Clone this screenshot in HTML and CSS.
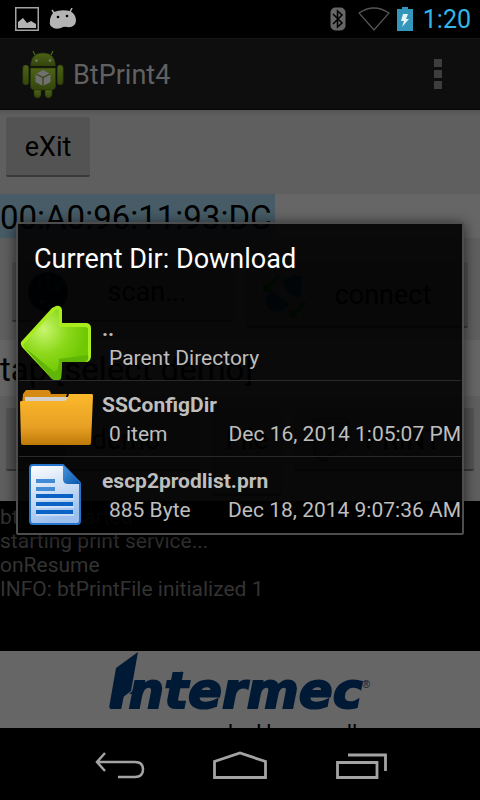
FILE: index.html
```html
<!DOCTYPE html>
<html lang="en">
<head>
<meta charset="utf-8">
<meta name="viewport" content="width=device-width, initial-scale=1">
<title>BtPrint4</title>
<link rel="stylesheet" href="styles.css">
</head>
<body>
<div class="screen">
  <header class="status">
    <div class="status-group">
      <svg width="24" height="24" viewBox="0 0 24 24" aria-hidden="true"><rect x=".75" y=".75" width="22.5" height="22.5" fill="none" stroke="#a3a3a3" stroke-width="1.5"/><path d="M3 21V15L8 11L12 16L16 14L21 17V21Z" fill="#b4b4b4"/></svg>
      <svg width="28" height="22" viewBox="0 0 28 22" aria-hidden="true"><path d="M5 5L3 2M21 4L23 0" stroke="#b4b4b4" stroke-width="1.5"/><path d="M5 4Q12 1 21 3Q27 6 27 13Q26 20 18 19Q15 18 12 20Q6 22 3 19Q0 17 1 13Q1 8 5 4Z" fill="#b4b4b4"/><circle cx="9" cy="9" r="1.3"/><circle cx="18" cy="8" r="1.3"/></svg>
    </div>
    <div class="status-group status-right">
      <svg width="16" height="24" viewBox="0 0 16 24" aria-hidden="true"><rect x=".5" y=".5" width="15" height="23" rx="5" fill="#666"/><path d="M3 7L12 16L7.500 20V4L12 8L3 17" fill="none" stroke="#000" stroke-width="1.5"/></svg>
      <svg class="wifi" width="32" height="24" viewBox="0 0 32 24" aria-hidden="true"><path d="M1 6Q16 -4 31 6L16 23Z" fill="none" stroke="#555" stroke-width="1.3"/></svg>
      <svg width="16" height="24" viewBox="0 0 16 24" aria-hidden="true"><path d="M5 0H11V2H16V24H0V2H5Z" fill="#3496ba"/><path d="M6 7H11L9 12H12L5 20L7 14H4Z" fill="#e6f3f8"/></svg>
      <span class="clock">1:20</span>
    </div>
  </header>

  <div class="action-bar">
    <svg width="42" height="50" viewBox="0 0 42 50" aria-hidden="true"><defs><linearGradient id="robot" x2="0" y2="1"><stop stop-color="#4c6317"/><stop offset="1" stop-color="#34460d"/></linearGradient></defs><g fill="url(#robot)" stroke="#263508" stroke-width=".6"><path d="M8.500 17Q9 4 21 4T33.500 17Z"/><path d="M8.500 19H33.500V37Q33.500 41 29 41H13Q8.500 41 8.500 37Z"/><rect x=".8" y="16" width="6" height="20" rx="3"/><rect x="35.200" y="16" width="6" height="20" rx="3"/><path d="M12 41H19V46Q18 49 15.500 49T12 46ZM23 41H30V46Q29 49 26.500 49T23 46Z"/></g><path d="M13 6L11 2M29 6L31 2" stroke="#4c6317" stroke-width="1.3"/><circle cx="14.500" cy="11.500" r="1.300" fill="#777"/><circle cx="28" cy="11.500" r="1.300" fill="#777"/><path d="M21 21L28.500 25V33L21 37L13.500 33V25Z" fill="#707070"/><path d="M14 25L21 28.500L28 25M21 28.500V37" fill="none" stroke="#34460d" stroke-width="1.3"/></svg>
    <h1>BtPrint4</h1>
    <button class="overflow" type="button" aria-label="More options"><i></i><i></i><i></i></button>
  </div>

  <main class="content">
    <div class="band exit-band"><button class="btn" type="button">eXit</button></div>
    <div class="address"><span>00:A0:96:11:93:DC</span></div>
    <div class="band connect-band">
      <button class="btn wide" type="button"><svg width="40" height="40" viewBox="0 0 40 40" aria-hidden="true"><circle cx="20" cy="20" r="20" fill="#001326"/><path d="M20 1V20L35 10" fill="none" stroke="#052a23" stroke-width="2"/><path d="M10 12h3v3h-3zM28 15h3v3h-3zM12 28h4v3h-4z" fill="#074024"/></svg><span>scan...</span></button>
      <button class="btn wide tall" type="button"><svg width="44" height="44" viewBox="0 0 44 44" aria-hidden="true"><path d="M20 9Q30 0 41 3L38 24Q27 24 20 9ZM3 26L10 17L27 31Q19 44 6 36Z" fill="#1a3350"/><path d="M17 3L3 17M3 11V17H9M43 29L29 43M29 37V43H35" fill="none" stroke="#0a4a0a" stroke-width="4"/></svg><span>connect</span></button>
    </div>
    <p class="selection">tap [select demo]</p>
    <div class="band print-band">
      <button class="btn demo" type="button"><svg width="46" height="48" viewBox="0 0 46 48" aria-hidden="true"><rect y="6" width="46" height="40" rx="6" fill="#3c3c3c"/></svg><span>demo</span></button>
      <button class="btn file" type="button">File</button>
      <button class="btn print" type="button"><svg width="38" height="44" viewBox="0 0 38 44" aria-hidden="true"><path d="M2 0H34L38 8L34 30L18 37L13 44L3 38Z" fill="#484848" stroke="#333" stroke-width="2"/></svg><span>PRINT</span></button>
    </div>
    <div class="log"><p>btprint started</p><p>starting print service...</p><p>onResume</p><p>INFO: btPrintFile initialized 1</p></div>
    <footer class="brand">
      <svg class="logo" width="262" height="62" viewBox="0 0 262 62" role="img" aria-label="Intermec"><text class="wordmark" x="1" y="57">Intermec</text><path d="M0 57L7 17L29 1L22 40Z"/><path d="M20 43L36 29L34 43ZM58 32L73 20L71 33Z"/><text class="registered" x="253" y="37">®</text></svg>
      <p>by Honeywell</p>
    </footer>
  </main>

  <nav class="nav" aria-label="System navigation">
    <button type="button" aria-label="Back"><svg width="52" height="30" viewBox="0 0 52 30"><path d="M12 2L4 11L12 20M4 11H42Q50 11 50 18.500T42 26H25" fill="none" stroke="#a3a3a3" stroke-width="2.500"/></svg></button>
    <button type="button" aria-label="Home"><svg width="54" height="30" viewBox="0 0 54 30"><path d="M1.500 26.500V10.500L27 2L52.500 10.500V26.500Z" fill="none" stroke="#a3a3a3" stroke-width="2.800"/></svg></button>
    <button type="button" aria-label="Recent apps"><svg width="52" height="30" viewBox="0 0 52 30"><path d="M2.500 11.500H42V26.500H2.500ZM13 4H50.500V20" fill="none" stroke="#a3a3a3" stroke-width="2.800"/></svg></button>
  </nav>

  <section class="dialog" role="dialog" aria-labelledby="dialog-title">
    <h2 id="dialog-title">Current Dir: Download</h2>
    <ul>
      <li>
        <svg width="76" height="76" viewBox="0 0 76 76" aria-hidden="true"><defs><radialGradient id="arrow" cx=".32" cy=".3" r=".65"><stop stop-color="#c8f56e"/><stop offset=".55" stop-color="#8dd91b"/><stop offset="1" stop-color="#70c804"/></radialGradient></defs><path d="M2 37Q1 39 3 42L33 74Q37 76 42 74L43 57H68Q72 56 72 51V23Q72 19 68 18H43V5Q42 0 37 1L33 3Z" fill="#a9ed1e"/><path d="M4 40L35 71Q38 73 41 71V54H66Q69 54 69 50V24Q69 22 66 22H40V6Q39 3 36 5Z" fill="url(#arrow)"/><path d="M4 41L34 66Q40 69 40 54L69 50Q70 56 66 57H43L42 74Q37 76 33 74Z" fill="#61b506"/></svg>
        <div class="entry"><strong>..</strong><div class="meta"><span>Parent Directory</span></div></div>
      </li>
      <li>
        <svg width="76" height="76" viewBox="0 0 76 76" aria-hidden="true"><defs><linearGradient id="folder" x2="0" y2="1"><stop stop-color="#fdb92c"/><stop offset=".65" stop-color="#e7a024"/><stop offset="1" stop-color="#be7908"/></linearGradient></defs><path d="M4 13L7 9H29Q31 9 32 13H48L44 24H3Z" fill="#d68a12"/><path d="M6 16H50L45 23H6Z" fill="#d3d0cb"/><path d="M1 21Q1 20 3 20H45Q48 20 50 13H73Q74 13 74 15L72 62Q72 64 70 64H4Q2 64 2 62Z" fill="url(#folder)"/></svg>
        <div class="entry"><strong>SSConfigDir</strong><div class="meta"><span>0 item</span><time>Dec 16, 2014 1:05:07 PM</time></div></div>
      </li>
      <li>
        <svg width="76" height="76" viewBox="0 0 76 76" aria-hidden="true"><defs><linearGradient id="paper" x2=".3" y2="1"><stop stop-color="#fff"/><stop offset="1" stop-color="#9cbfec"/></linearGradient><linearGradient id="fold" x2="1" y2="1"><stop stop-color="#4996de"/><stop offset="1" stop-color="#0754aa"/></linearGradient></defs><path d="M14 8H44L61 26V64Q61 67 58 67H14Q11 67 11 64V11Q11 8 14 8Z" fill="url(#paper)" stroke="#2674cc" stroke-width="2"/><path d="M44 8L62 27H49Q44 27 44 22Z" fill="url(#fold)"/><path d="M17 24H36M17 32H36" stroke="#448bd5" stroke-width="4"/><path d="M17 39H54M17 47H54M17 55H54" stroke="#0962c4" stroke-width="4"/><path d="M17 42H55M17 50H55M17 58H55" stroke="#e9f2ff" stroke-width="1"/></svg>
        <div class="entry"><strong>escp2prodlist.prn</strong><div class="meta"><span>885 Byte</span><time>Dec 18, 2014 9:07:36 AM</time></div></div>
      </li>
    </ul>
  </section>
</div>
</body>
</html>
```
FILE: styles.css
```css
* { box-sizing: border-box; }
body { margin: 0; background: #000; font-family: Roboto, "Liberation Sans", sans-serif; }
h1, h2, p, ul { margin: 0; padding: 0; font-weight: 400; }
button { border: 0; padding: 0; background: none; color: inherit; font: inherit; }
svg { display: block; flex: none; }

.screen { position: relative; display: flex; flex-direction: column; min-height: 100vh; overflow: hidden; }
.status { display: flex; justify-content: space-between; align-items: center; height: 38px; padding: 0 9px 0 15px; }
.status-group { display: flex; align-items: center; gap: 10px; }
.status-right { gap: 8px; }
.wifi { margin: 0 -1px 0 4px; }
.clock { padding: 2px 0 0 2px; color: #33b5e5; font-size: 25px; line-height: 36px; }

.action-bar { display: flex; align-items: center; gap: 9px; min-height: 72px; padding: 0 38px 0 22px; background: #0e0e0e; border-top: 1px solid #171717; border-bottom: 1px solid #050505; }
.action-bar h1 { flex: 1; padding-top: 2px; color: #616161; font-size: 27px; line-height: 36px; }
.overflow { display: grid; gap: 3px; }
.overflow i { width: 8px; height: 8px; background: #3d3d3d; }

.content { flex: 1; display: flex; flex-direction: column; background: #666; color: #000; }
.band { display: flex; background: #5f5f5f; }
.btn { display: flex; align-items: center; justify-content: center; min-height: 60px; padding: 2px 18px 0; background: #535353; border-bottom: 2px solid #393939; border-radius: 2px; font-size: 27px; line-height: 36px; }
.btn span { flex: 1; }
.exit-band { padding: 7px 6px 17px; background: linear-gradient(#555, #5f5f5f 6px); }
.exit-band .btn { min-width: 84px; }
.address { font-size: 33px; line-height: 40px; }
.address span { display: inline-block; padding: 4px 3px 0 0; background: #475c66; }
.connect-band { gap: 12px; padding: 24px 12px 12px; align-items: flex-start; }
.wide { flex: 1; padding: 2px 8px 0 16px; }
.tall { min-height: 66px; }
.selection { padding: 10px 0 6px; font-size: 33px; line-height: 40px; }
.print-band { gap: 12px; padding: 12px 6px 5px; align-items: flex-start; }
.demo { flex: 1; padding: 2px 14px 0; min-height: 63px; }
.file { width: 70px; padding: 2px 8px 24px; min-height: 88px; }
.print { width: 180px; min-height: 63px; }
.log { min-height: 150px; padding-top: 4px; background: #000; color: #333; font-size: 21px; line-height: 24px; }
.brand { height: 77px; overflow: hidden; background: #666; }
.logo { margin: 0 auto; fill: #001a36; }
.wordmark { font: italic 700 50px "DejaVu Sans", sans-serif; stroke: #001a36; stroke-width: 2; }
.registered { font: 11px "Liberation Sans", sans-serif; }
.brand p { padding-left: 228px; padding-top: 8px; font-size: 22px; line-height: 24px; }

.nav { display: flex; justify-content: center; align-items: center; gap: 68px; height: 72px; padding-top: 4px; background: #000; }

.dialog { position: absolute; top: 222px; left: 16px; right: 16px; background: rgba(0, 0, 0, .9); border: 2px solid #4d4d4d; border-radius: 2px; box-shadow: 0 2px 14px rgba(0, 0, 0, .65); color: #bebebe; }
.dialog h2 { padding: 15px 16px 26px; color: #fff; font-size: 27px; line-height: 40px; }
.dialog ul { list-style: none; }
.dialog li { display: flex; align-items: center; gap: 7px; height: 76px; margin: 0 1px; border-bottom: 1px solid #2a2a2a; }
.dialog li:last-child { border-bottom: 0; }
.entry { flex: 1; padding-top: 2px; font-size: 21px; line-height: 29px; }
.entry strong { display: block; font-weight: 700; }
.meta { display: flex; justify-content: space-between; padding-left: 7px; white-space: nowrap; }
```
